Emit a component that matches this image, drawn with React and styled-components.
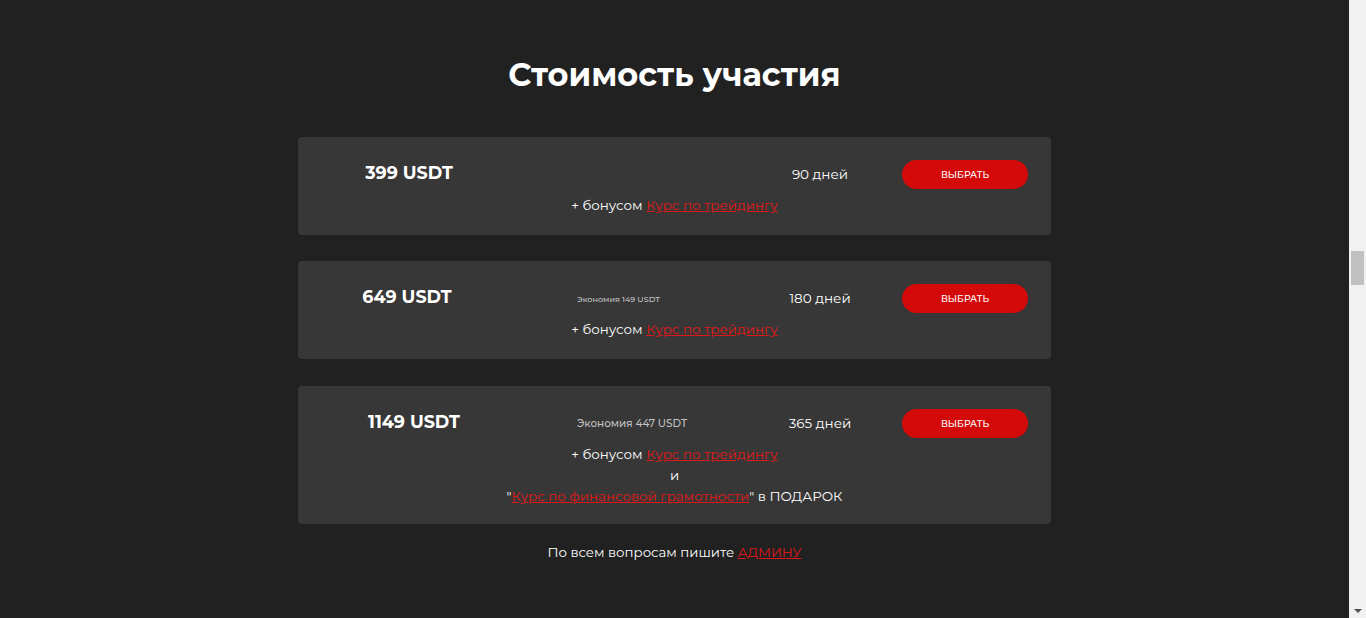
import React from "react";
import styled, { createGlobalStyle } from "styled-components";

const GlobalStyle = createGlobalStyle`
  body {
    margin: 0;
    background: #212121;
    font-family: "Montserrat", "Open Sans", "Noto Sans", sans-serif;
    color: #ffffff;
  }
`;

const Page = styled.div`
  display: flex;
  height: 618px;
  overflow: hidden;
`;

const Section = styled.section`
  flex: 1;
  box-sizing: border-box;
  padding-top: 52px;
  display: flex;
  flex-direction: column;
  align-items: center;
`;

const ScrollTrack = styled.div`
  width: 17px;
  background: #f1f1f1;
  display: flex;
  flex-direction: column;
  align-items: center;
`;

const ScrollThumb = styled.div`
  margin-top: 251px;
  width: 13px;
  height: 34px;
  background: #c1c1c1;
`;

const ScrollArrow = styled.div`
  margin-top: auto;
  margin-bottom: 5px;
  width: 0;
  height: 0;
  border-left: 4px solid transparent;
  border-right: 4px solid transparent;
  border-top: 4px solid #505050;
`;

const Title = styled.h2`
  margin: 0 0 39px;
  font-size: 32px;
  line-height: 46px;
  font-weight: 700;
`;

const Plans = styled.div`
  width: 753px;
  display: flex;
  flex-direction: column;
  gap: 26px;
`;

const Card = styled.div`
  background: #373737;
  border-radius: 4px;
  margin-top: ${(p) => (p.$tall ? 1 : 0)}px;
  padding: 23px 23px ${(p) => (p.$tall ? 18 : 20)}px 0;
`;

const TopRow = styled.div`
  display: grid;
  grid-template-columns: 222px 222px 156px 1fr;
  align-items: center;
  height: 29px;
`;

const Price = styled.div`
  text-align: center;
  font-size: 17.5px;
  font-weight: 700;
  transform: translate(${(p) => p.$shift || 0}px, -2px);
`;

const Saving = styled.div`
  padding-left: 57px;
  font-size: ${(p) => p.$size}px;
  font-weight: 500;
  color: #c4c4c4;
  white-space: nowrap;
`;

const Days = styled.div`
  text-align: center;
  font-size: 13.5px;
  white-space: nowrap;
  transform: translateY(-1px);
`;

const Button = styled.button`
  justify-self: end;
  width: 126px;
  height: 29px;
  border: none;
  border-radius: 15px;
  background: #d40a0a;
  color: #ffffff;
  font-family: inherit;
  font-size: 9.3px;
  font-weight: 500;
  cursor: pointer;
`;

const Bonus = styled.div`
  margin-top: 6px;
  padding-left: 23px;
  text-align: center;
  font-size: 13.4px;
  line-height: 20px;
`;

const Line = styled.div`
  & + & {
    margin-top: 1px;
  }
`;

const Link = styled.a`
  color: #e01717;
  text-decoration: underline;
`;

const Footer = styled.p`
  margin: 18px 0 0;
  font-size: 13.3px;
  line-height: 20px;
`;

const plans = [
  { price: "399 USDT", days: "90 дней" },
  { price: "649 USDT", days: "180 дней", saving: "Экономия 149 USDT", size: 8, shift: -2 },
  { price: "1149 USDT", days: "365 дней", saving: "Экономия 447 USDT", size: 10.4, gift: true, shift: 5 },
];

export default function App() {
  return (
    <>
      <GlobalStyle />
      <Page>
        <Section>
          <Title>Стоимость участия</Title>
          <Plans>
            {plans.map((p) => (
              <Card key={p.price} $tall={p.gift}>
                <TopRow>
                  <Price $shift={p.shift}>{p.price}</Price>
                  <Saving $size={p.size}>{p.saving}</Saving>
                  <Days>{p.days}</Days>
                  <Button>ВЫБРАТЬ</Button>
                </TopRow>
                <Bonus>
                  <Line>
                    + бонусом <Link href="#">Курс по трейдингу</Link>
                  </Line>
                  {p.gift && (
                    <>
                      <Line>и</Line>
                      <Line>
                        "<Link href="#">Курс по финансовой грамотности</Link>" в ПОДАРОК
                      </Line>
                    </>
                  )}
                </Bonus>
              </Card>
            ))}
          </Plans>
          <Footer>
            По всем вопросам пишите <Link href="#">АДМИНУ</Link>
          </Footer>
        </Section>
        <ScrollTrack>
          <ScrollThumb />
          <ScrollArrow />
        </ScrollTrack>
      </Page>
    </>
  );
}
